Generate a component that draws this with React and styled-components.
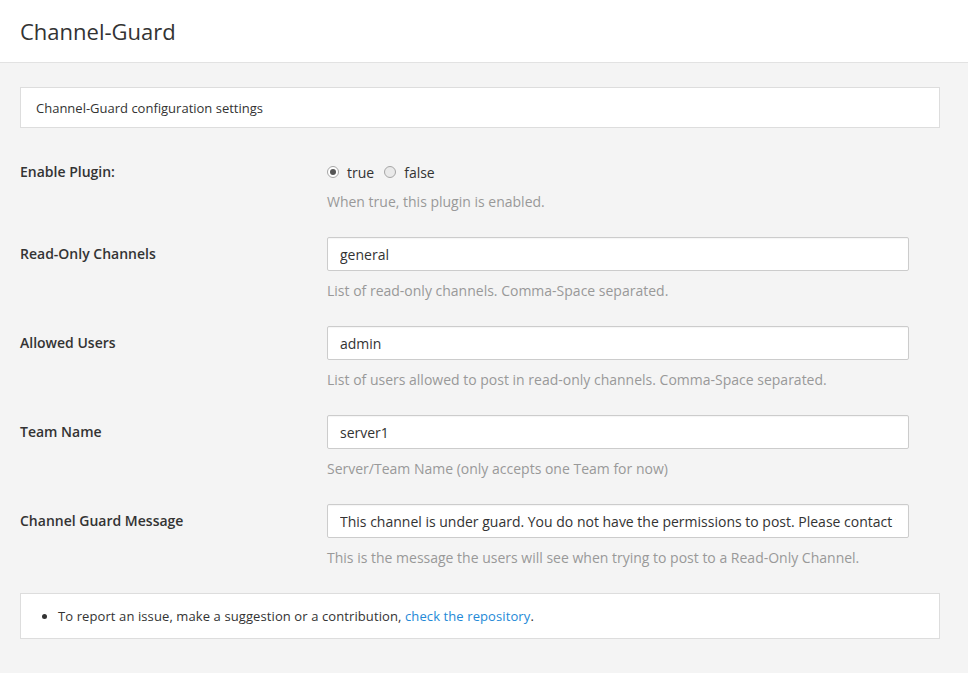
import React from "react";
import styled, { createGlobalStyle } from "styled-components";

const GlobalStyle = createGlobalStyle`
  html, body {
    margin: 0;
    padding: 0;
    background: #f4f4f4;
  }
  body {
    font-family: "Open Sans", "Noto Sans", sans-serif;
    color: #333;
    font-size: 14px;
  }
`;

const Page = styled.div`
  width: 968px;
  min-height: 673px;
  background: #f4f4f4;
`;

const Header = styled.div`
  height: 63px;
  background: #fff;
  border-bottom: 1px solid #e2e2e2;
  display: flex;
  align-items: center;
  padding: 0 20px;
  box-sizing: border-box;
`;

const Title = styled.h3`
  margin: 0;
  font-size: 22px;
  font-weight: 400;
  color: #333;
  line-height: 1;
`;

const Body = styled.div`
  padding: 24px 28px 30px 20px;
`;

const Panel = styled.div`
  background: #fff;
  border: 1px solid #ddd;
  box-sizing: border-box;
  height: ${(p) => p.$height}px;
  display: flex;
  align-items: center;
  padding: 0 15px;
  font-size: 13px;
  color: #333;
  margin-bottom: ${(p) => p.$mb || 0}px;
`;

const Form = styled.div`
  display: flex;
  flex-direction: column;
  margin-bottom: 25px;
`;

const Row = styled.div`
  display: grid;
  grid-template-columns: 307px 582px;
  margin-bottom: ${(p) => (p.$last ? 0 : 25)}px;
`;

const Label = styled.label`
  font-weight: 600;
  font-size: 14px;
  color: #333;
  padding-top: ${(p) => p.$pt}px;
  line-height: 20px;
`;

const Control = styled.div`
  display: flex;
  flex-direction: column;
`;

const RadioGroup = styled.div`
  display: flex;
  align-items: center;
  height: 20px;
`;

const RadioLabel = styled.label`
  display: flex;
  align-items: center;
  font-size: 14px;
  color: #333;
  margin-right: 10px;
`;

const Radio = styled.span`
  width: 10px;
  height: 10px;
  border-radius: 50%;
  border: 1px solid #a6a6a6;
  background: ${(p) => (p.$checked ? "#fff" : "#e9e9e9")};
  margin-right: 8px;
  position: relative;
  box-sizing: content-box;
  &::after {
    content: "";
    display: ${(p) => (p.$checked ? "block" : "none")};
    position: absolute;
    left: 2px;
    top: 2px;
    width: 6px;
    height: 6px;
    border-radius: 50%;
    background: #555;
  }
`;

const Input = styled.input`
  height: 34px;
  box-sizing: border-box;
  width: 100%;
  border: 1px solid #ccc;
  border-radius: 2px;
  background: #fff;
  padding: 0 12px;
  font-family: "Open Sans", "Noto Sans", sans-serif;
  font-size: 14px;
  color: #333;
  box-shadow: inset 0 1px 1px rgba(0, 0, 0, 0.04);
  outline: none;
`;

const Help = styled.div`
  margin-top: 10px;
  line-height: 20px;
  font-size: 14px;
  color: #999;
`;

const List = styled.ul`
  margin: 0;
  padding-left: 22px;
  letter-spacing: 0.1px;
  li {
    line-height: 20px;
  }
`;

const Link = styled.a`
  color: #2389d7;
  text-decoration: none;
`;

const fields = [
  {
    label: "Read-Only Channels",
    value: "general",
    help: "List of read-only channels. Comma-Space separated.",
  },
  {
    label: "Allowed Users",
    value: "admin",
    help: "List of users allowed to post in read-only channels. Comma-Space separated.",
  },
  {
    label: "Team Name",
    value: "server1",
    help: "Server/Team Name (only accepts one Team for now)",
  },
  {
    label: "Channel Guard Message",
    value:
      "This channel is under guard. You do not have the permissions to post. Please contact the administrator.",
    help: "This is the message the users will see when trying to post to a Read-Only Channel.",
  },
];

const App = () => {
  return (
    <Page>
      <GlobalStyle />
      <Header>
        <Title>Channel-Guard</Title>
      </Header>
      <Body>
        <Panel $height={41} $mb={34}>
          Channel-Guard configuration settings
        </Panel>
        <Form>
          <Row>
            <Label $pt={0}>Enable Plugin:</Label>
            <Control>
              <RadioGroup>
                <RadioLabel>
                  <Radio $checked />
                  true
                </RadioLabel>
                <RadioLabel>
                  <Radio />
                  false
                </RadioLabel>
              </RadioGroup>
              <Help>When true, this plugin is enabled.</Help>
            </Control>
          </Row>
          {fields.map((f, i) => (
            <Row key={f.label} $last={i === fields.length - 1}>
              <Label $pt={7}>{f.label}</Label>
              <Control>
                <Input defaultValue={f.value} readOnly />
                <Help>{f.help}</Help>
              </Control>
            </Row>
          ))}
        </Form>
        <Panel $height={46}>
          <List>
            <li>
              To report an issue, make a suggestion or a contribution,{" "}
              <Link href="#">check the repository</Link>.
            </li>
          </List>
        </Panel>
      </Body>
    </Page>
  );
};

export default App;
